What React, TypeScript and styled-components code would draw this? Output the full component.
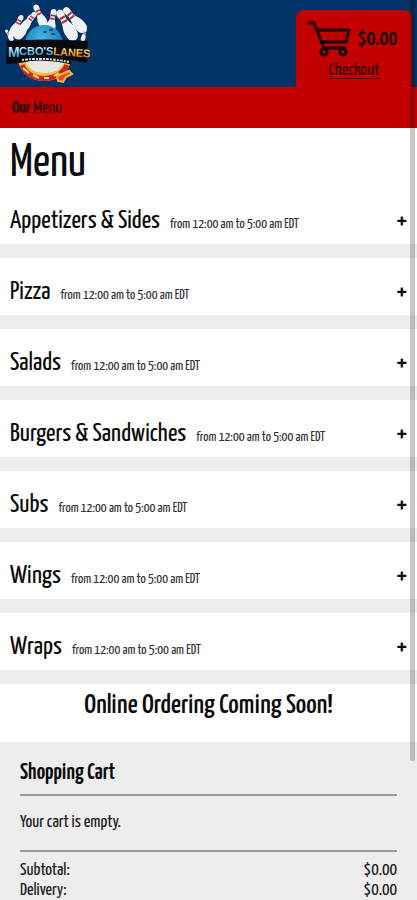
import React from "react";
import styled, { createGlobalStyle } from "styled-components";

const Global = createGlobalStyle`
  *, *::before, *::after { box-sizing: border-box; }
  body { margin: 0; background: #ededed; }
  h1, h2, h3, p, dl, dd, ul { margin: 0; padding: 0; font-weight: 400; }
  html { scrollbar-width: none; }
`;

const Page = styled.div`
  position: relative;
  max-height: 100vh;
  overflow: hidden;
  background: #ededed;
  color: #0c0c0c;
  font-family: "Yanone Kaffeesatz", "Liberation Sans Narrow", "Liberation Sans", sans-serif;
  font-size: 18px;
  line-height: 20px;
`;

const Header = styled.header`
  display: flex;
  justify-content: space-between;
  align-items: stretch;
  background: #003366;
  height: 87px;
  padding: 0 5px;
`;

const LogoLink = styled.a`
  display: block;
  padding-top: 4px;
  svg { display: block; }
`;

const CartTab = styled.div`
  width: 116px;
  margin-top: 10px;
  padding-top: 10px;
  background: #c20000;
  border-radius: 8px 8px 0 0;
  text-align: center;
`;

const CartTotal = styled.div`
  display: flex;
  justify-content: center;
  align-items: center;
  gap: 6px;
  height: 38px;
  padding-right: 4px;
  font-size: 22px;
  font-weight: 600;
  color: #180000;
`;

const CheckoutLink = styled.a`
  display: block;
  color: #300000;
  text-decoration: underline;
  text-underline-offset: 3px;
  text-decoration-thickness: 1px;
  line-height: 26px;
`;

const Nav = styled.nav`
  display: flex;
  align-items: center;
  height: 41px;
  padding: 2px 12px 0;
  background: #c20000;
  a { color: #300000; text-decoration: none; }
`;

const Main = styled.main`
  background: #fff;
`;

const Title = styled.h1`
  padding: 11px 10px 0;
  font-size: 47px;
  line-height: 48px;
`;

const Section = styled.button`
  display: flex;
  align-items: baseline;
  width: 100%;
  height: 71px;
  padding: 20px 10px 0;
  border: 0;
  border-bottom: 14px solid #ededed;
  background: #fff;
  color: inherit;
  font: inherit;
  text-align: left;
  cursor: pointer;
`;

const SectionName = styled.span`
  font-size: 26px;
  line-height: 28px;
`;

const Hours = styled.span`
  flex: 1;
  margin-left: 10px;
  font-size: 14px;
  color: #333;
`;

const Plus = styled.span`
  font-size: 26px;
  font-weight: 600;
`;

const Notice = styled.h2`
  padding: 8px 0 22px;
  font-size: 28px;
  line-height: 28px;
  font-weight: 500;
  text-align: center;
`;

const Cart = styled.section`
  padding: 20px;
`;

const CartTitle = styled.h3`
  padding: 1px 0 11px;
  border-bottom: 2px solid #999;
  font-size: 23px;
  line-height: 20px;
  font-weight: 600;
`;

const Empty = styled.p`
  padding: 17px 0;
  border-bottom: 2px solid #999;
  color: #222;
`;

const Totals = styled.dl`
  padding-top: 9px;
  color: #222;
`;

const TotalRow = styled.div`
  display: flex;
  justify-content: space-between;
`;

const ScrollThumb = styled.div`
  position: absolute;
  top: 0;
  right: 2px;
  width: 5px;
  height: 761px;
  border-radius: 0 0 3px 3px;
  background: rgba(0, 0, 0, 0.22);
`;

const pins = [
  { x: 4, y: 31, r: -32, s: 5 },
  { x: 12, y: 21, r: 28, s: 9 },
  { x: 20, y: 22, r: 36, s: 11 },
  { x: 24, y: 17, r: 38, s: 9 },
  { x: 35, y: 12, r: -24, s: 10 },
  { x: 47, y: 17, r: 10, s: 10 },
  { x: 61, y: 20, r: -30, s: 13 },
  { x: 69, y: 15, r: -42, s: 12 },
  { x: 79, y: 31, r: 14, s: 5 },
];

const Logo = () => (
  <svg width="86" height="82" viewBox="0 0 86 82" role="img" aria-label="McBo's Lanes">
    <defs>
      <radialGradient id="ball" cx="45%" cy="32%" r="70%">
        <stop offset="0" stopColor="#44b6ea" />
        <stop offset="1" stopColor="#0870a8" />
      </radialGradient>
      <linearGradient id="blueText" x1="0" y1="0" x2="0" y2="1">
        <stop offset="0.2" stopColor="#d4f2ff" />
        <stop offset="0.8" stopColor="#2aa4e0" />
      </linearGradient>
      <linearGradient id="goldText" x1="0" y1="0" x2="0" y2="1">
        <stop offset="0.2" stopColor="#ffe96a" />
        <stop offset="0.8" stopColor="#ed7a1c" />
      </linearGradient>
    </defs>
    {pins.map((p, i) => (
      <g key={i} transform={`translate(${p.x} ${p.y}) rotate(${p.r}) scale(${p.s / 9})`}>
        <path d="M0-11C3-11 3-8 2-4C2 0 5 3 4 8C4 11 2 13 0 13C-2 13-4 11-4 8C-5 3-2 0-2-4C-3-8-3-11 0-11Z" fill="#eef2f5" />
        <path d="M-2-5H2M-2-2H2" stroke="#bd2934" strokeWidth="1.5" />
      </g>
    ))}
    <circle cx="39" cy="40" r="19" fill="url(#ball)" />
    <ellipse cx="40" cy="28" rx="2" ry="1" fill="#073a5c" />
    <ellipse cx="46" cy="26" rx="2" ry="1" fill="#073a5c" />
    <ellipse cx="48" cy="30" rx="2" ry="1" fill="#073a5c" />
    <path d="M13 56C17 84 61 84 66 56Z" fill="#f5bd38" />
    <path d="M17 61C24 79 54 79 62 61" fill="none" stroke="#c42821" strokeWidth="5" />
    <path d="M18 64L24 69M28 71L34 74M39 74L44 74M49 72L54 69" stroke="#ffd868" strokeWidth="2" />
    <path d="M52 72L64 67L67 70L61 73L58 78L53 77Z" fill="#e8462b" stroke="#f5bd38" strokeWidth="2" />
    <path d="M19 53H61C58 66 50 69 40 69C29 69 22 65 19 53Z" fill="#e7e7e2" />
    <path d="M2 37Q42 34 83 37L82 59L66 56V60L40 54L15 59L1 60Z" fill="#060a0d" />
    <g fontFamily="Liberation Sans, sans-serif" fontWeight="700">
      <text x="3" y="53" fontSize="14" fill="url(#blueText)">M</text>
      <text x="14" y="51" fontSize="11" fill="url(#blueText)">CBO'S</text>
      <text x="48" y="51" fontSize="11" fill="url(#goldText)" transform="rotate(4 48 51)">LANES</text>
    </g>
    <path d="M15 55Q40 51 66 57L65 60Q40 54 15 58Z" fill="#060a0d" />
    <path d="M17 56Q40 53 64 58" fill="none" stroke="#d7d7d7" strokeWidth="2" strokeDasharray="2 1 3 1" />
  </svg>
);

const CartIcon = () => (
  <svg width="45" height="36" viewBox="0 0 45 36" fill="none" stroke="#180000" strokeWidth="3">
    <path d="M1 2H7L17 27H39M10 9H42L39 21H15" strokeLinejoin="round" />
    <circle cx="17" cy="31" r="3.2" />
    <circle cx="36" cy="31" r="3.2" />
  </svg>
);

const sections = ["Appetizers & Sides", "Pizza", "Salads", "Burgers & Sandwiches", "Subs", "Wings", "Wraps"];

export default function App() {
  return (
    <Page>
      <Global />
      <Header>
        <LogoLink href="#"><Logo /></LogoLink>
        <CartTab>
          <CartTotal><CartIcon /><span>$0.00</span></CartTotal>
          <CheckoutLink href="#checkout">Checkout</CheckoutLink>
        </CartTab>
      </Header>
      <Nav><a href="#menu"><b>Our</b> Menu</a></Nav>
      <Main>
        <Title>Menu</Title>
        {sections.map((name) => (
          <Section key={name} type="button">
            <SectionName>{name}</SectionName>
            <Hours>from 12:00 am to 5:00 am EDT</Hours>
            <Plus>+</Plus>
          </Section>
        ))}
        <Notice>Online Ordering Coming Soon!</Notice>
      </Main>
      <Cart>
        <CartTitle>Shopping Cart</CartTitle>
        <Empty>Your cart is empty.</Empty>
        <Totals>
          <TotalRow><dt>Subtotal:</dt><dd>$0.00</dd></TotalRow>
          <TotalRow><dt>Delivery:</dt><dd>$0.00</dd></TotalRow>
        </Totals>
      </Cart>
      <ScrollThumb />
    </Page>
  );
}
